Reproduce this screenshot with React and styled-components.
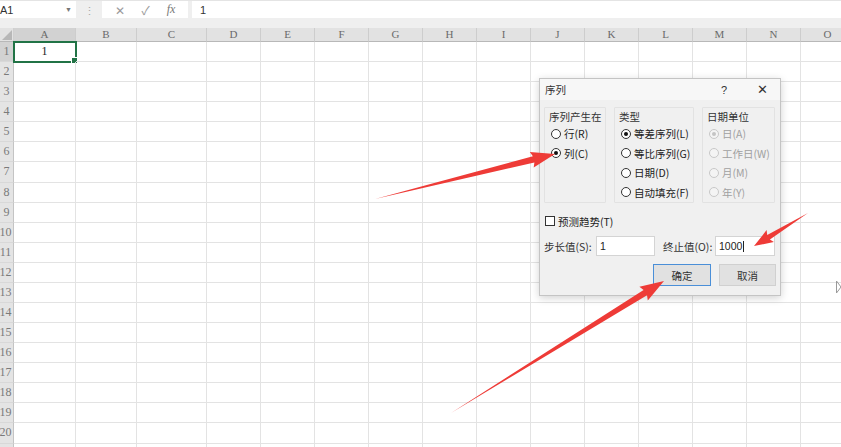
import React from "react";
import styled, { createGlobalStyle, css } from "styled-components";

const GlobalStyle = createGlobalStyle`
  html, body { margin: 0; padding: 0; background: #ffffff; overflow: hidden; }
  * { box-sizing: border-box; }
`;

const UI = `"Noto Sans CJK SC", "Noto Sans", "Liberation Sans", sans-serif`;
const SERIF = `"Liberation Serif", "DejaVu Serif", serif`;

const Page = styled.div`
  position: relative;
  width: 841px;
  height: 447px;
  overflow: hidden;
  background: #ffffff;
  font-family: ${UI};
`;

/* ---------- formula bar ---------- */
const TopArea = styled.div`
  background: #efefef;
  padding-bottom: 10px;
  border-top: 1px solid #e4e4e4;
`;

const FormulaBar = styled.div`
  height: 17px;
  display: flex;
  align-items: stretch;
`;

const NameBox = styled.div`
  width: 76px;
  background: #ffffff;
  display: flex;
  align-items: center;
  justify-content: space-between;
  padding: 0 4px 0 0;
  font-size: 11px;
  color: #333;
  font-family: "Liberation Sans", sans-serif;
`;

const Caret = styled.span`
  font-size: 7px;
  color: #777;
`;

const Grip = styled.div`
  width: 26px;
  display: flex;
  align-items: center;
  justify-content: center;
  color: #a8a8a8;
  font-size: 11px;
`;

const FxBox = styled.div`
  width: 86px;
  background: #ffffff;
  display: flex;
  align-items: center;
  justify-content: space-around;
  padding: 0 4px;
  color: #9a9a9a;
  font-size: 12px;
`;

const Fx = styled.span`
  font-family: ${SERIF};
  font-style: italic;
  font-size: 12px;
  color: #777;
`;

const FormulaInput = styled.div`
  flex: 1;
  margin-left: 4px;
  background: #ffffff;
  display: flex;
  align-items: center;
  padding-left: 8px;
  font-size: 11px;
  color: #333;
  font-family: "Liberation Sans", sans-serif;
`;

/* ---------- sheet ---------- */
const Sheet = styled.div`
  display: grid;
  grid-template-columns: ${(p) => p.$cols};
  grid-template-rows: 14px;
  grid-auto-rows: 20.08px;
`;

const Corner = styled.div`
  position: relative;
  background: #e2e2e2;
  border-right: 1px solid #cfcfcf;
  border-bottom: 1px solid #b8b8b8;
  &::after {
    content: "";
    position: absolute;
    right: 1px;
    bottom: 1px;
    border-style: solid;
    border-width: 0 0 10px 10px;
    border-color: transparent transparent #b7b7b7 transparent;
  }
`;

const ColHead = styled.div`
  background: ${(p) => (p.$active ? "#d2d2d2" : "#e2e2e2")};
  border-right: 1px solid #cdcdcd;
  border-bottom: 1px solid ${(p) => (p.$active ? "#8aa797" : "#b8b8b8")};
  font-family: ${SERIF};
  font-size: 11px;
  line-height: 13px;
  color: #6a6a6a;
  text-align: center;
`;

const RowHead = styled.div`
  background: ${(p) => (p.$active ? "#d2d2d2" : "#e4e4e4")};
  border-right: 1px solid #c4c4c4;
  border-bottom: 1px solid #d8d8d8;
  font-family: ${SERIF};
  font-size: 12px;
  line-height: 19px;
  color: #7a7a7a;
  text-align: center;
  white-space: nowrap;
  overflow: visible;
  text-indent: ${(p) => (p.$wide ? "-2px" : "0")};
`;

const Cell = styled.div`
  position: relative;
  border-right: 1px solid #e3e3e3;
  border-bottom: 1px solid #e3e3e3;
  font-family: ${SERIF};
  font-size: 12px;
  line-height: 19px;
  color: #222;
  text-align: center;
  ${(p) =>
    p.$selected &&
    css`
      outline: 2px solid #217346;
      outline-offset: -1px;
      &::after {
        content: "";
        position: absolute;
        right: -3px;
        bottom: -3px;
        width: 5px;
        height: 5px;
        background: #217346;
        border: 1px solid #fff;
      }
    `}
`;

/* ---------- dialog ---------- */
const Dialog = styled.div`
  position: absolute;
  left: 539px;
  top: 78px;
  width: 242px;
  height: 218px;
  background: #f0f0f0;
  border: 1px solid #c4c4c4;
  box-shadow: 0 2px 8px rgba(0, 0, 0, 0.18);
  display: flex;
  flex-direction: column;
  font-family: ${UI};
  font-size: 10.5px;
  color: #222;
`;

const TitleBar = styled.div`
  height: 21px;
  background: #f7f7f7;
  display: flex;
  align-items: center;
  padding-left: 5px;
`;

const Title = styled.span`
  flex: 1;
  font-size: 10.5px;
  color: #333;
`;

const TitleBtn = styled.span`
  width: ${(p) => p.$w}px;
  margin-left: ${(p) => p.$ml || 0}px;
  margin-right: ${(p) => p.$mr || 0}px;
  text-align: center;
  font-size: ${(p) => p.$size}px;
  color: #333;
  font-family: "Liberation Sans", sans-serif;
`;

const Body = styled.div`
  flex: 1;
  padding: 7px 4px 0 4px;
  display: flex;
  flex-direction: column;
`;

const Groups = styled.div`
  display: grid;
  grid-template-columns: 62px 80px 73px;
  column-gap: 8px;
  height: 96px;
`;

const Group = styled.div`
  border: 1px solid #e2e2e2;
  border-radius: 1px;
  padding: 1px 0 0 4px;
  display: flex;
  flex-direction: column;
`;

const GroupLabel = styled.div`
  height: 15px;
  line-height: 15px;
  color: #333;
  white-space: nowrap;
`;

const Option = styled.div`
  height: 19.5px;
  display: flex;
  align-items: center;
  gap: 3px;
  white-space: nowrap;
  color: ${(p) => (p.$disabled ? "#a0a0a0" : "#222")};
  padding-left: 2px;
`;

const RadioDot = styled.span`
  width: 10px;
  height: 10px;
  border-radius: 50%;
  flex: none;
  border: 1px solid ${(p) => (p.$disabled ? "#c8c8c8" : "#333")};
  background: ${(p) => (p.$disabled ? "#f4f4f4" : "#fff")};
  display: flex;
  align-items: center;
  justify-content: center;
  &::after {
    content: "";
    width: 4px;
    height: 4px;
    border-radius: 50%;
    background: ${(p) =>
      p.$checked ? (p.$disabled ? "#c4c4c4" : "#111") : "transparent"};
  }
`;

const CheckRow = styled.div`
  margin-top: 10px;
  height: 16px;
  display: flex;
  align-items: center;
  gap: 3px;
  padding-left: 1px;
`;

const CheckBox = styled.span`
  width: 10px;
  height: 10px;
  border: 1px solid #333;
  background: #fff;
`;

const InputRow = styled.div`
  margin-top: 7px;
  height: 20px;
  display: flex;
  align-items: center;
`;

const FieldLabel = styled.span`
  width: 52px;
  margin-left: ${(p) => p.$ml || 0}px;
  white-space: nowrap;
  color: #333;
`;

const Field = styled.div`
  width: ${(p) => p.$w}px;
  height: 20px;
  background: #fff;
  border: 1px solid #d4d4d4;
  display: flex;
  align-items: center;
  padding-left: 3px;
  font-family: "Liberation Sans", sans-serif;
  font-size: 10.5px;
  color: #222;
`;

const Caret2 = styled.span`
  width: 1px;
  height: 11px;
  background: #222;
  margin-left: 1px;
`;

const ButtonRow = styled.div`
  margin-top: 8px;
  display: flex;
  justify-content: flex-end;
  gap: 8px;
`;

const Button = styled.div`
  width: ${(p) => p.$w}px;
  height: 22px;
  background: #e1e1e1;
  border: 1px solid ${(p) => (p.$primary ? "#4a8fd8" : "#d0d0d0")};
  display: flex;
  align-items: center;
  justify-content: center;
  color: #333;
  font-size: 10.5px;
`;

/* ---------- overlay arrows ---------- */
const Overlay = styled.svg`
  position: absolute;
  left: 0;
  top: 0;
  pointer-events: none;
`;

function arrowPoints(tx, ty, px, py, headLen, headHalf, shaftHalf) {
  const dx = px - tx;
  const dy = py - ty;
  const len = Math.hypot(dx, dy);
  const ux = dx / len;
  const uy = dy / len;
  const nx = -uy;
  const ny = ux;
  const bx = px - ux * headLen;
  const by = py - uy * headLen;
  const pts = [
    [tx, ty],
    [bx + nx * shaftHalf, by + ny * shaftHalf],
    [bx - ux * 2 + nx * headHalf, by - uy * 2 + ny * headHalf],
    [px, py],
    [bx - ux * 2 - nx * headHalf, by - uy * 2 - ny * headHalf],
    [bx - nx * shaftHalf, by - ny * shaftHalf],
  ];
  return pts.map((p) => p.map((v) => v.toFixed(1)).join(",")).join(" ");
}

const ARROWS = [
  { t: [375, 199], p: [555, 154], hl: 22, hh: 8, sh: 3.2 },
  { t: [451, 413], p: [664, 281], hl: 22, hh: 8, sh: 3.2 },
  { t: [808, 213], p: [754, 246], hl: 17, hh: 7, sh: 2.6 },
];

const COLS = [
  ["A", 62],
  ["B", 61],
  ["C", 70],
  ["D", 54],
  ...["E", "F", "G", "H", "I", "J", "K", "L", "M", "N", "O"].map((l) => [l, 54]),
];

const ROWS = Array.from({ length: 21 }, (_, i) => i + 1);

function Radio({ label, checked, disabled }) {
  return (
    <Option $disabled={disabled}>
      <RadioDot $checked={checked} $disabled={disabled} />
      <span>{label}</span>
    </Option>
  );
}

export default function App() {
  const colTemplate = ["14px", ...COLS.map(([, w]) => `${w}px`)].join(" ");
  return (
    <Page>
      <GlobalStyle />
      <TopArea>
        <FormulaBar>
          <NameBox>
            <span>A1</span>
            <Caret>▼</Caret>
          </NameBox>
          <Grip>⋮</Grip>
          <FxBox>
            <span>✕</span>
            <span>✓</span>
            <Fx>fx</Fx>
          </FxBox>
          <FormulaInput>1</FormulaInput>
        </FormulaBar>
      </TopArea>

      <Sheet $cols={colTemplate}>
        <Corner />
        {COLS.map(([l]) => (
          <ColHead key={l} $active={l === "A"}>
            {l}
          </ColHead>
        ))}
        {ROWS.map((r) => (
          <React.Fragment key={r}>
            <RowHead $active={r === 1} $wide={r >= 10}>
              {r <= 20 ? r : ""}
            </RowHead>
            {COLS.map(([l]) => {
              const sel = r === 1 && l === "A";
              return (
                <Cell key={l} $selected={sel}>
                  {sel ? "1" : ""}
                </Cell>
              );
            })}
          </React.Fragment>
        ))}
      </Sheet>

      <Dialog>
        <TitleBar>
          <Title>序列</Title>
          <TitleBtn $w={14} $size={11}>?</TitleBtn>
          <TitleBtn $w={24} $size={13} $ml={19} $mr={6}>
            ✕
          </TitleBtn>
        </TitleBar>
        <Body>
          <Groups>
            <Group>
              <GroupLabel>序列产生在</GroupLabel>
              <Radio label="行(R)" />
              <Radio label="列(C)" checked />
            </Group>
            <Group>
              <GroupLabel>类型</GroupLabel>
              <Radio label="等差序列(L)" checked />
              <Radio label="等比序列(G)" />
              <Radio label="日期(D)" />
              <Radio label="自动填充(F)" />
            </Group>
            <Group>
              <GroupLabel>日期单位</GroupLabel>
              <Radio label="日(A)" checked disabled />
              <Radio label="工作日(W)" disabled />
              <Radio label="月(M)" disabled />
              <Radio label="年(Y)" disabled />
            </Group>
          </Groups>
          <CheckRow>
            <CheckBox />
            <span>预测趋势(T)</span>
          </CheckRow>
          <InputRow>
            <FieldLabel>步长值(S):</FieldLabel>
            <Field $w={59}>1</Field>
            <FieldLabel $ml={8}>终止值(O):</FieldLabel>
            <Field $w={60}>
              1000
              <Caret2 />
            </Field>
          </InputRow>
          <ButtonRow>
            <Button $w={58} $primary>
              确定
            </Button>
            <Button $w={57}>取消</Button>
          </ButtonRow>
        </Body>
      </Dialog>

      <Overlay width="841" height="447" viewBox="0 0 841 447">
        {ARROWS.map((a, i) => (
          <polygon
            key={i}
            points={arrowPoints(a.t[0], a.t[1], a.p[0], a.p[1], a.hl, a.hh, a.sh)}
            fill="#ee3b37"
          />
        ))}
        <path
          d="M836.5 281 L836.5 293 L841 287 Z"
          fill="#ffffff"
          stroke="#9a9a9a"
          strokeWidth="1"
        />
      </Overlay>
    </Page>
  );
}
